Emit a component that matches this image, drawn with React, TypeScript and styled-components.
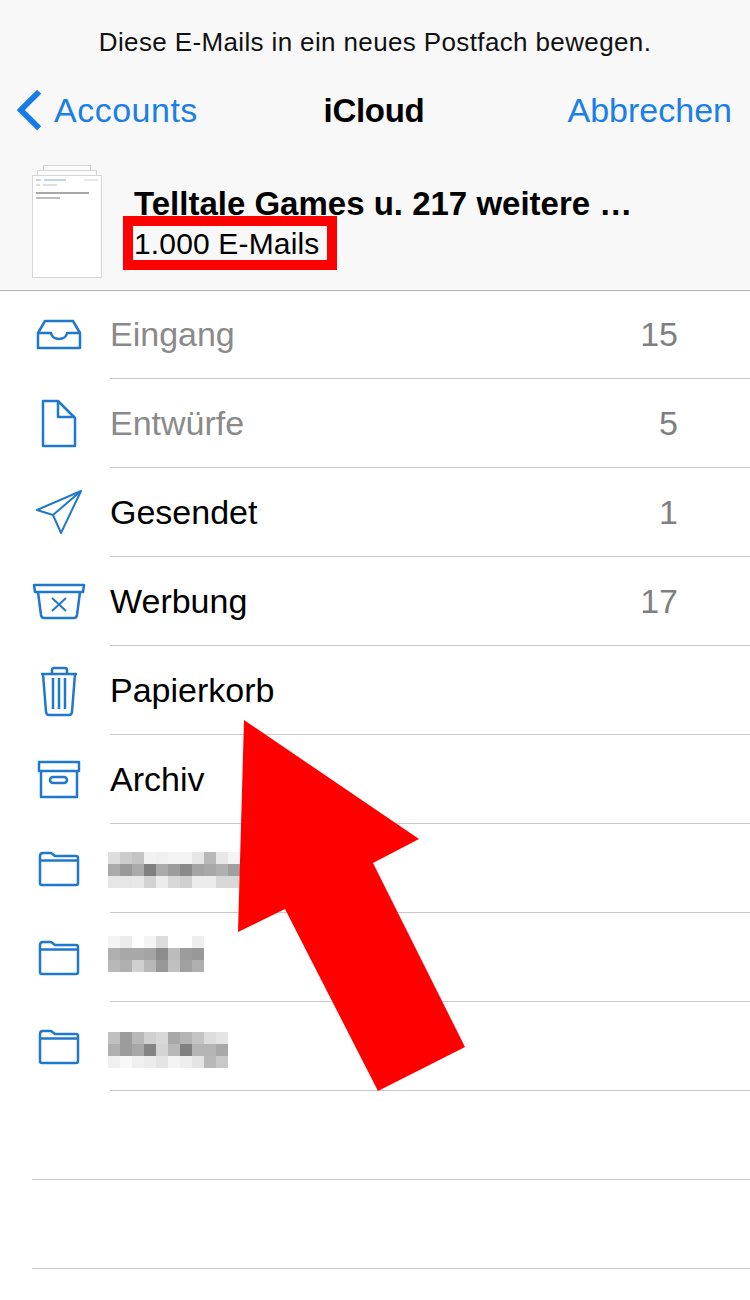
import React from "react";
import styled, { createGlobalStyle } from "styled-components";

const GlobalStyle = createGlobalStyle`
  html, body {
    margin: 0;
    padding: 0;
    background: #fff;
  }
  body {
    font-family: "Liberation Sans", Arial, sans-serif;
    color: #000;
  }
`;

type Mailbox = {
  label?: string;
  count?: string;
  muted?: boolean;
  icon: React.ReactNode;
  mosaic?: string[][];
  mosaicTop?: number;
};

const InboxIcon = () => (
  <Icon viewBox="0 0 60 60">
    <path d="M16 16H44L51 28V43H9V28Z" />
    <path d="M9 28H22C23 36 37 36 38 28H51" />
  </Icon>
);

const DraftIcon = () => (
  <Icon viewBox="0 0 60 60">
    <path d="M14 7H29L46 24V52H14Z" />
    <path d="M29 7V23H46" />
  </Icon>
);

const SentIcon = () => (
  <Icon viewBox="0 0 60 60" $thin>
    <path d="M52 8L8 27L24 32L32 50Z" />
    <path d="M52 8L24 32" />
  </Icon>
);

const JunkIcon = () => (
  <Icon viewBox="0 0 60 60">
    <path d="M5 13H55L54 20H6Z" />
    <path d="M9 20L12 43Q12.500 46 15 46H45Q47.500 46 48 43L51 20" />
    <XMark d="M23 26L37 39M37 26L23 39" />
  </Icon>
);

const TrashIcon = () => (
  <Icon viewBox="0 0 60 60">
    <path d="M12 13H48" />
    <path d="M23 12V9Q23 7 25 7H36Q38 7 38 9V12" />
    <path d="M14 13L17 51Q17.500 54 20 54H40Q42.500 54 43 51L46 13" />
    <path d="M24 17V48M30 17V48M36 17V48" />
  </Icon>
);

const ArchiveIcon = () => (
  <Icon viewBox="0 0 60 60">
    <path d="M10 12H50V21H10Z" />
    <path d="M12 21V47H48V21" />
    <rect x="21" y="27" width="17" height="6" rx="3" />
  </Icon>
);

const FolderIcon = () => (
  <Icon viewBox="0 0 60 60">
    <path d="M11 17Q11 14 14 14H22L26 17H47Q49 17 49 19V44Q49 46 47 46H13Q11 46 11 44Z" />
    <path d="M11 21.500H49" />
  </Icon>
);

const mailboxes: Mailbox[] = [
  { label: "Eingang", count: "15", muted: true, icon: <InboxIcon /> },
  { label: "Entwürfe", count: "5", muted: true, icon: <DraftIcon /> },
  { label: "Gesendet", count: "1", icon: <SentIcon /> },
  { label: "Werbung", count: "17", icon: <JunkIcon /> },
  { label: "Papierkorb", icon: <TrashIcon /> },
  { label: "Archiv", icon: <ArchiveIcon /> },
  {
    icon: <FolderIcon />,
    mosaicTop: 28,
    mosaic: [
      ["#ddd", "#ccc", "#c4c4c4", "#f2f2f2", "#f0f0f0", "#f4f4f4", "#f4f4f4", "#e6e6e6", "#b8b8b8", "#e8e8e8", "#f4f4f4"],
      ["#aaa", "#999", "#aaa", "#808080", "#aaa", "#9c9c9c", "#8a8a8a", "#a4a4a4", "#a8a8a8", "#b0b0b0", "#a0a0a0"],
      ["#e6e6e6", "#e6e6e6", "#e8e8e8", "#d2d2d2", "#ececec", "#d8d8d8", "#d0d0d0", "#ececec", "#ececec", "#d8d8d8", "#d8d8d8"],
    ],
  },
  {
    icon: <FolderIcon />,
    mosaicTop: 23,
    mosaic: [
      ["#f4f4f4", "#ececec", "#fff", "#f4f4f4", "#dcdcdc", "#fff", "#fff", "#eee"],
      ["#b0b0b0", "#a8a8a8", "#a8a8a8", "#a4a4a4", "#8c8c8c", "#bcbcbc", "#9c9c9c", "#989898"],
      ["#b8b8b8", "#b0b0b0", "#d0d0d0", "#b8b8b8", "#989898", "#c0c0c0", "#a0a0a0", "#b0b0b0"],
    ],
  },
  {
    icon: <FolderIcon />,
    mosaicTop: 30,
    mosaic: [
      ["#c0c0c0", "#9c9c9c", "#b8b8b8", "#d0d0d0", "#d8d8d8", "#a8a8a8", "#b4b4b4", "#c4c4c4", "#dcdcdc", "#e4e4e4"],
      ["#b0b0b0", "#9c9c9c", "#a8a8a8", "#848484", "#d4d4d4", "#b8b8b8", "#808080", "#b4b4b4", "#b4b4b4", "#a8a8a8"],
      ["#f0f0f0", "#f8f8f8", "#f0f0f0", "#ececec", "#e4e4e4", "#f4f4f4", "#eee", "#e4e4e4", "#b8b8b8", "#c8c8c8"],
    ],
  },
];

const App = () => {
  return (
    <Page>
      <GlobalStyle />
      <Header>
        <Hint>Diese E-Mails in ein neues Postfach bewegen.</Hint>
        <NavBar>
          <BackLink>
            <Chevron viewBox="0 0 28 44">
              <path d="M24 3L5 22L24 41" />
            </Chevron>
            Accounts
          </BackLink>
          <NavTitle>iCloud</NavTitle>
          <CancelLink>Abbrechen</CancelLink>
        </NavBar>
        <Selection>
          <Thumb>
            <ThumbBack $inset={11} />
            <ThumbBack $inset={5} />
            <ThumbSheet>
              <ThumbMeta>
                <ThumbLine $width={5} $color="#d4d4d4" />
                <ThumbLine $width={22} $color="#bcd4ee" />
                <ThumbLine $width={14} $color="#e2e8ee" $push />
              </ThumbMeta>
              <ThumbMeta>
                <ThumbLine $width={4} $color="#dcdcdc" />
                <ThumbLine $width={14} $color="#e0e0e0" />
              </ThumbMeta>
              <ThumbLine $width={53} $color="#a8a8a8" $gap={3} />
              <ThumbLine $width={24} $color="#bcbcbc" />
            </ThumbSheet>
          </Thumb>
          <SelectionText>
            <SelectionTitle>Telltale Games u. 217 weitere …</SelectionTitle>
            <SelectionCount>1.000 E-Mails</SelectionCount>
          </SelectionText>
        </Selection>
      </Header>
      <List>
        {mailboxes.map((box, i) => (
          <Row key={i}>
            <IconCell>{box.icon}</IconCell>
            <RowBody>
              {box.mosaic ? (
                <Mosaic $top={box.mosaicTop ?? 0}>
                  {box.mosaic.map((cells, r) => (
                    <MosaicRow key={r}>
                      {cells.map((shade, c) => (
                        <MosaicCell key={c} $shade={shade} />
                      ))}
                    </MosaicRow>
                  ))}
                </Mosaic>
              ) : (
                <Label $muted={box.muted}>{box.label}</Label>
              )}
              {box.count && <Count>{box.count}</Count>}
            </RowBody>
          </Row>
        ))}
        <EmptyRow />
        <EmptyRow />
      </List>
      <Arrow viewBox="0 0 750 1300">
        <polygon points="244,720 419,839 373,863 465,1047 378,1091 285,909 238,932" />
      </Arrow>
    </Page>
  );
};

const Page = styled.div`
  position: relative;
  width: 750px;
  height: 1300px;
  overflow: hidden;
  background: #fff;
`;

const Header = styled.header`
  height: 291px;
  box-sizing: border-box;
  background: #f8f8f8;
  border-bottom: 1px solid #b4b4b4;
`;

const Hint = styled.div`
  height: 84px;
  display: flex;
  align-items: center;
  justify-content: center;
  font-size: 26px;
  letter-spacing: 0.37px;
  color: #111;
`;

const NavBar = styled.nav`
  height: 52px;
  display: grid;
  grid-template-columns: 1fr auto 1fr;
  align-items: center;
  padding: 0 18px 0 16px;
  font-size: 34px;
`;

const BackLink = styled.div`
  display: flex;
  align-items: center;
  gap: 11px;
  letter-spacing: 0.5px;
  color: #1a7fe6;
`;

const Chevron = styled.svg`
  width: 27px;
  height: 44px;
  fill: none;
  stroke: #147be8;
  stroke-width: 6;
`;

const NavTitle = styled.div`
  padding-top: 1px;
  font-size: 33px;
  font-weight: 700;
  letter-spacing: -0.3px;
  color: #000;
`;

const CancelLink = styled.div`
  text-align: right;
  color: #1a7fe6;
`;

const Selection = styled.div`
  display: flex;
  align-items: flex-start;
  margin-top: 29px;
  padding-left: 32px;
`;

const Thumb = styled.div`
  position: relative;
  width: 70px;
  height: 114px;
  flex: none;
`;

const ThumbBack = styled.div<{ $inset: number }>`
  position: absolute;
  top: ${(p) => (p.$inset === 11 ? 0 : 5)}px;
  left: ${(p) => p.$inset}px;
  right: ${(p) => p.$inset}px;
  height: 20px;
  box-sizing: border-box;
  border: 1px solid #d6d6d6;
  background: #fbfbfb;
`;

const ThumbSheet = styled.div`
  position: absolute;
  top: 10px;
  left: 0;
  right: 0;
  bottom: 1px;
  box-sizing: border-box;
  padding: 3px 3px;
  display: flex;
  flex-direction: column;
  gap: 3px;
  border: 1px solid #d6d6d6;
  background: #fff;
`;

const ThumbMeta = styled.div`
  display: flex;
  gap: 3px;
`;

const ThumbLine = styled.div<{ $width: number; $color: string; $gap?: number; $push?: boolean }>`
  width: ${(p) => p.$width}px;
  height: 2px;
  margin-top: ${(p) => p.$gap ?? 0}px;
  margin-left: ${(p) => (p.$push ? "auto" : "0")};
  background: ${(p) => p.$color};
`;

const SelectionText = styled.div`
  margin: 20px 0 0 32px;
`;

const SelectionTitle = styled.div`
  font-size: 33px;
  font-weight: 700;
  line-height: 38px;
  white-space: nowrap;
`;

const SelectionCount = styled.div`
  position: relative;
  width: fit-content;
  margin-top: 4px;
  font-size: 30px;
  letter-spacing: 0.16px;
  line-height: 34px;

  &::after {
    content: "";
    position: absolute;
    top: -11px;
    bottom: -9px;
    left: -11px;
    right: -17px;
    border: 10px solid #ff0000;
  }
`;

const List = styled.div`
  display: flex;
  flex-direction: column;
  margin-top: -1px;
`;

const Row = styled.div`
  height: 89px;
  display: flex;
`;

const IconCell = styled.div`
  flex: none;
  width: 110px;
  box-sizing: border-box;
  padding: 15px 0 0 29px;
`;

const Icon = styled.svg<{ $thin?: boolean }>`
  display: block;
  width: 60px;
  height: 60px;
  fill: none;
  stroke: #1f78cc;
  stroke-width: ${(p) => (p.$thin ? 2 : 2.5)};
  stroke-linejoin: round;
`;

const XMark = styled.path`
  stroke-width: 2;
`;

const RowBody = styled.div`
  flex: 1;
  display: flex;
  align-items: center;
  justify-content: space-between;
  padding-right: 72px;
  box-sizing: border-box;
  border-bottom: 1px solid #c8c8c8;
`;

const Label = styled.div<{ $muted?: boolean }>`
  font-size: 34px;
  color: ${(p) => (p.$muted ? "#8a8a8a" : "#000")};
`;

const Count = styled.div`
  font-size: 34px;
  color: #7f7f7f;
`;

const Mosaic = styled.div<{ $top: number }>`
  align-self: flex-start;
  margin: ${(p) => p.$top}px 0 0 -2px;
`;

const MosaicRow = styled.div`
  display: flex;
`;

const MosaicCell = styled.div<{ $shade: string }>`
  width: 12px;
  height: 12px;
  background: ${(p) => p.$shade};
`;

const EmptyRow = styled.div`
  height: 89px;
  margin-left: 32px;
  box-sizing: border-box;
  border-bottom: 1px solid #c8c8c8;
`;

const Arrow = styled.svg`
  position: absolute;
  top: 0;
  left: 0;
  width: 750px;
  height: 1300px;
  fill: #ff0000;
  pointer-events: none;
`;

export default App;
